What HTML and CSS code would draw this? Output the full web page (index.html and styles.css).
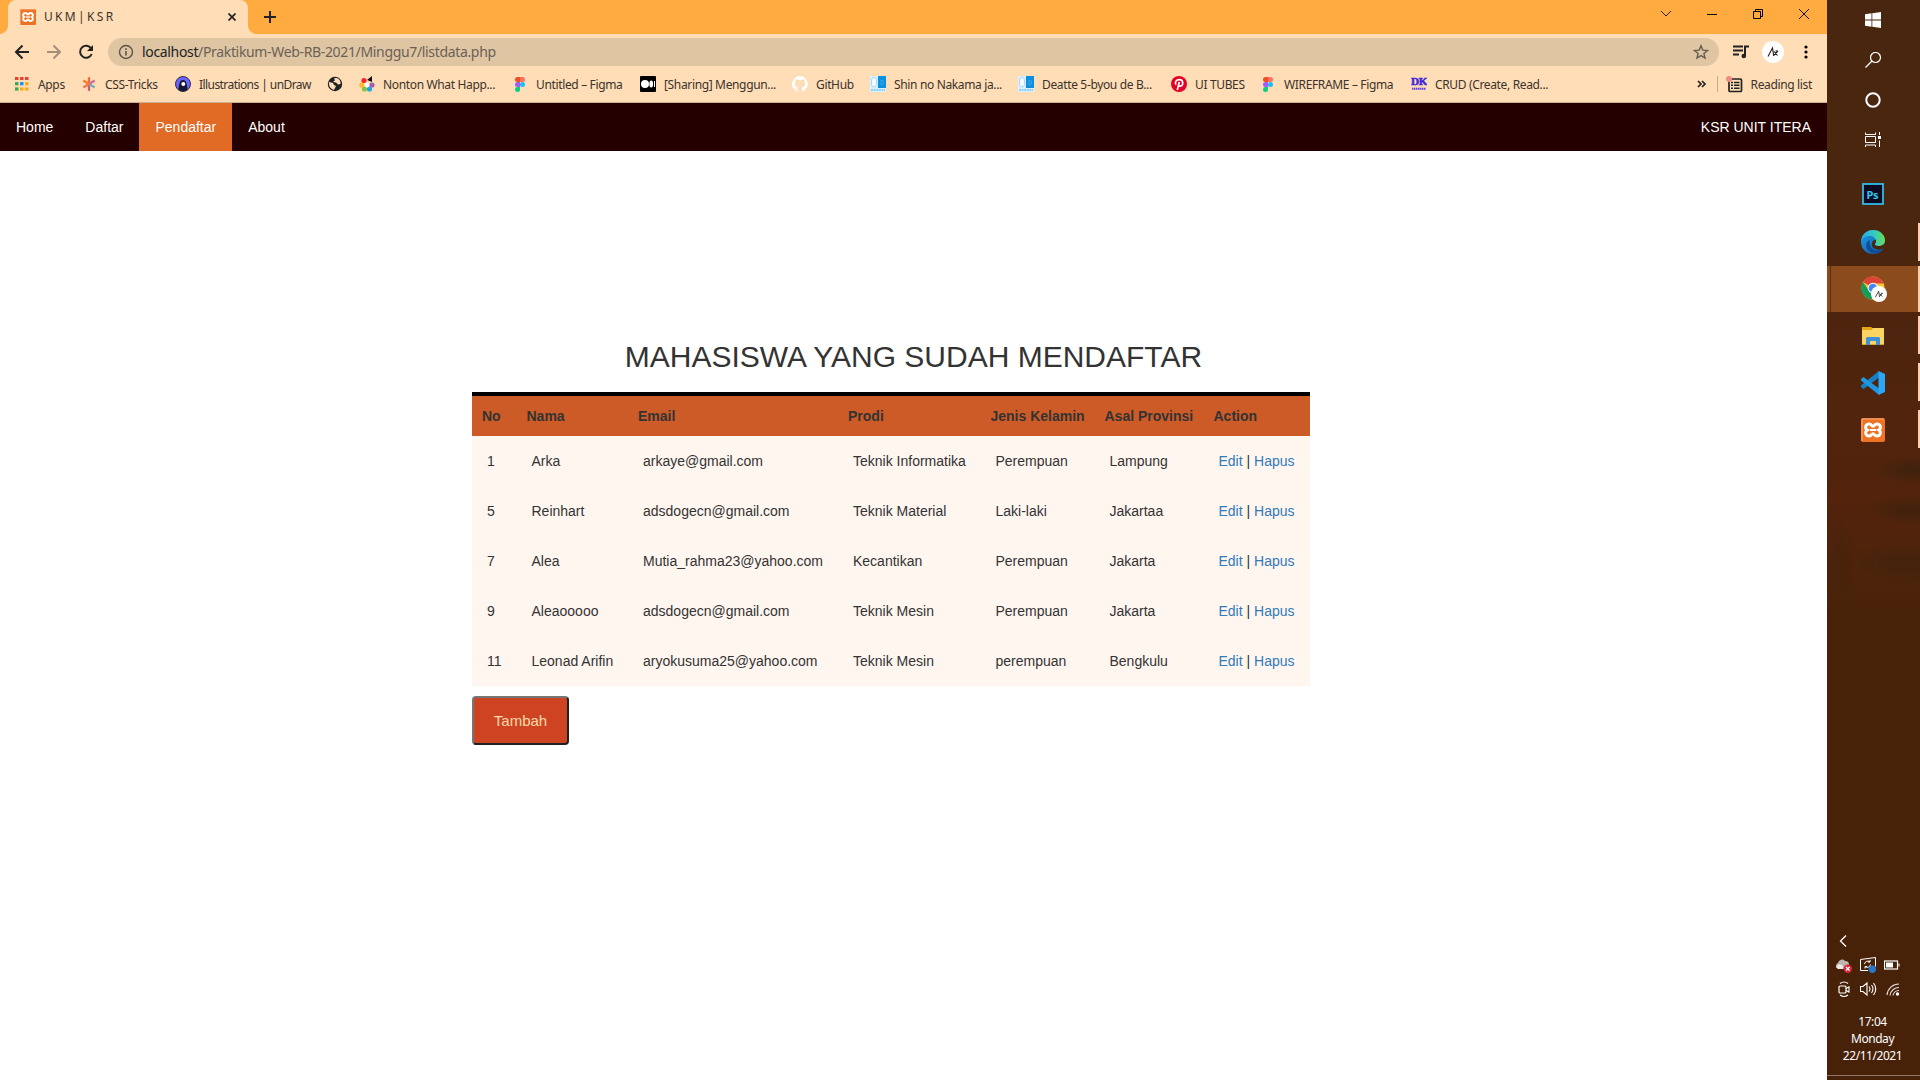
FILE: index.html
```html
<!DOCTYPE html>
<html lang="id">
<head>
<meta charset="utf-8">
<title>U K M | K S R</title>
<link rel="stylesheet" href="styles.css">
</head>
<body>
<svg class="defs" width="0" height="0">
  <symbol id="xampp" viewBox="0 0 24 24"><rect width="24" height="24" rx="2" fill="#ed7324"/><path d="M1 1h22M1 1v22" stroke="#f5a46e" stroke-width="1.2"/><path d="M8.200 6C4 6 3.800 10.500 6.300 12 3.800 13.500 4 18 8.200 18 10.700 18 10.500 15.700 12 15.700s1.300 2.300 3.800 2.300c4.200 0 4.400-4.500 1.900-6 2.500-1.500 2.300-6-1.900-6-2.500 0-2.300 2.300-3.800 2.300S10.700 6 8.200 6z" fill="none" stroke="#fff" stroke-width="3"/><path d="M9 12h6" stroke="#fff" stroke-width="2"/></symbol>
  <symbol id="figma" viewBox="0 0 16 16"><path d="M5.500 1H8v5H5.500a2.500 2.500 0 010-5z" fill="#f24e1e"/><path d="M8 1h2.500a2.500 2.500 0 010 5H8z" fill="#ff7262"/><path d="M5.500 6H8v5H5.500a2.500 2.500 0 010-5z" fill="#a259ff"/><circle cx="10.500" cy="8.500" r="2.500" fill="#1abcfe"/><path d="M5.500 11H8v2.500A2.500 2.500 0 115.500 11z" fill="#0acf83"/></symbol>
  <symbol id="anime" viewBox="0 0 16 16"><rect width="16" height="16" fill="#d8f0ff"/><rect x="8" width="8" height="12" fill="#0c8fdc"/><rect x="1.500" y="1.500" width="5" height="9.500" rx="2.500" fill="#f4fbff" stroke="#a5daf8"/><path d="M11 4.500c2-.5 3 .5 2.500 2.500S12 9.500 11 9z" fill="none" stroke="#3aa8e8"/><path d="M1 14h14" stroke="#8fd2f7" stroke-width="2" stroke-dasharray="2 .6"/></symbol>
  <symbol id="avatar" viewBox="0 0 22 22"><circle cx="11" cy="11" r="11" fill="#fff"/><path d="M6 15.500l4.500-8.500 1.200 8M12 10.500l3.500 4M16 10l-4.500 4.500M13.500 10h2.500" fill="none" stroke="#222" stroke-width="1.100"/></symbol>
</svg>

<div class="desktop">
  <div class="browser">
    <div class="tabstrip">
      <div class="tab">
        <svg width="16" height="16"><use href="#xampp"/></svg>
        <span class="tab-title">U K M | K S R</span>
        <svg class="tab-close" width="8" height="8" viewBox="0 0 8 8"><path d="M.5.5l7 7M7.500.500l-7 7" stroke="#222" stroke-width="1.700"/></svg>
      </div>
      <svg class="new-tab" width="12" height="12" viewBox="0 0 12 12"><path d="M6 0v12M0 6h12" stroke="#222" stroke-width="2"/></svg>
      <div class="window-controls">
        <svg width="12" height="12" viewBox="0 0 12 12"><path d="M1 3l5 5 5-5" fill="none" stroke="#222"/></svg>
        <svg width="12" height="12" viewBox="0 0 12 12"><path d="M1 6.500h10" stroke="#000"/></svg>
        <svg width="12" height="12" viewBox="0 0 12 12"><path d="M1.500 3.500h7v7h-7zM3.500 3.500v-2h7v7h-2" fill="none" stroke="#000"/></svg>
        <svg width="12" height="12" viewBox="0 0 12 12"><path d="M1 1l10 10M11 1L1 11" stroke="#111"/></svg>
      </div>
    </div>

    <div class="toolbar">
      <svg width="16" height="16" viewBox="0 0 16 16"><path d="M15 8H2M8.500 1.500L2 8l6.500 6.500" fill="none" stroke="#222" stroke-width="2"/></svg>
      <svg width="16" height="16" viewBox="0 0 16 16"><path d="M1 8h13M7.500 1.500L14 8l-6.500 6.500" fill="none" stroke="#a38f79" stroke-width="2"/></svg>
      <svg width="16" height="16" viewBox="0 0 16 16"><path d="M13.200 4.600A6 6 0 1013.700 10" fill="none" stroke="#222" stroke-width="2"/><path d="M15 1v6H9z" fill="#222"/></svg>
      <div class="address">
        <svg width="16" height="16" viewBox="0 0 16 16"><circle cx="8" cy="8" r="6.500" fill="none" stroke="#5b544d" stroke-width="1.400"/><path d="M8 7v4.500M8 4.300V6" stroke="#5b544d" stroke-width="1.600"/></svg>
        <span class="url"><b>localhost</b>/Praktikum-Web-RB-2021/Minggu7/listdata.php</span>
        <svg width="16" height="16" viewBox="0 0 16 16"><path d="M8 1.800l1.800 4.300 4.700.400-3.600 3 1.100 4.500L8 11.600 4 14l1.100-4.500-3.600-3 4.700-.400z" fill="none" stroke="#655d55" stroke-width="1.400"/></svg>
      </div>
      <svg width="16" height="16" viewBox="0 0 16 16"><path d="M0 2.500h10M0 6.500h10M0 10.500h6" stroke="#222" stroke-width="2"/><path d="M12 12V2.500h4" fill="none" stroke="#222" stroke-width="2"/><circle cx="10.800" cy="12" r="2.300" fill="#222"/></svg>
      <svg width="22" height="22"><use href="#avatar"/></svg>
      <svg width="4" height="14" viewBox="0 0 4 14"><circle cx="2" cy="2" r="1.600"/><circle cx="2" cy="7" r="1.600"/><circle cx="2" cy="12" r="1.600"/></svg>
    </div>

    <div class="bookmarks">
      <div class="bookmark"><svg width="16" height="16" viewBox="0 0 16 16"><path d="M1 2.500h3.500M6 2.500h3.500M11 2.500h3.500" stroke="#ea4335" stroke-width="3.200"/><path d="M1 7.700h3.500" stroke="#34a853" stroke-width="3.200"/><path d="M6 7.700h3.500" stroke="#1a8cff" stroke-width="3.200"/><path d="M11 7.700h3.500" stroke="#fbab05" stroke-width="3.200"/><path d="M1 13h3.500" stroke="#34a853" stroke-width="3.200"/><path d="M6 13h3.500M11 13h3.500" stroke="#fbab05" stroke-width="3.200"/></svg><span>Apps</span></div>
      <div class="bookmark"><svg width="16" height="16" viewBox="0 0 16 16"><g stroke-width="2.300"><path d="M8 8V1.200" stroke="#f56b35"/><path d="M8 8v6.800" stroke="#d4566a"/><path d="M8 8L2.300 4.500" stroke="#ff7a22"/><path d="M8 8l5.700 3.500" stroke="#6fb0b8"/><path d="M8 8l5.700-3.500" stroke="#d66a9a"/><path d="M8 8l-5.700 3.500" stroke="#ee7650"/></g></svg><span>CSS-Tricks</span></div>
      <div class="bookmark tight"><svg width="16" height="16" viewBox="0 0 16 16"><circle cx="8" cy="8" r="7.500" fill="#6c63ff" stroke="#2f2e41"/><path d="M3.500 13.500C4 10 4 4 8 4s4 6 4.500 9.500A7 7 0 013.500 13.500z" fill="#17172d"/><circle cx="8.300" cy="8" r="2" fill="#fff"/></svg><span>Illustrations | unDraw</span></div>
      <div class="bookmark"><svg width="16" height="16" viewBox="0 0 16 16"><circle cx="8" cy="8" r="7.200" fill="#202124"/><path d="M2 6l4 1 1 2 2 1-2 4C4 13 2 11 2 8zM7 2.300l1 2L6 6l3 .500 2 2 2.500-.500C14 4 11 2 9 2z" fill="#ffddb8"/></svg></div>
      <div class="bookmark"><svg width="16" height="16" viewBox="0 0 16 16"><circle cx="5" cy="4.500" r="2.600" fill="#f3262e"/><circle cx="2.800" cy="9" r="2.600" fill="#fcb72b"/><circle cx="5.500" cy="13" r="2.600" fill="#8ac43f"/><circle cx="10.500" cy="13" r="2.600" fill="#22a7e0"/><circle cx="13" cy="9" r="2.600" fill="#a35bb4"/><circle cx="8" cy="9" r="2.400" fill="#fff"/><path d="M8 4l5-4v6z" fill="#111"/></svg><span>Nonton What Happ...</span></div>
      <div class="bookmark"><svg width="16" height="16"><use href="#figma"/></svg><span>Untitled – Figma</span></div>
      <div class="bookmark"><svg width="16" height="16" viewBox="0 0 16 16"><rect width="16" height="16" rx="1"/><circle cx="5" cy="8" r="4" fill="#fff"/><ellipse cx="11.200" cy="8" rx="1.900" ry="3.600" fill="#fff"/><path d="M14.500 5v6" stroke="#fff"/></svg><span>[Sharing] Menggun...</span></div>
      <div class="bookmark"><svg width="16" height="16" viewBox="0 0 16 16"><path fill="#fff" d="M8 0a8 8 0 00-2.500 15.600c.4.100.5-.2.500-.4v-1.500c-2.200.5-2.700-.9-2.700-.9-.4-.9-.9-1.200-.9-1.200-.7-.5.100-.5.100-.5.800.1 1.200.8 1.200.8.700 1.200 1.900.9 2.300.7.100-.5.300-.9.500-1.100-1.800-.2-3.600-.9-3.600-4 0-.9.300-1.600.8-2.100-.1-.2-.4-1 .1-2.100 0 0 .7-.2 2.200.8a7.500 7.500 0 014 0c1.500-1 2.200-.8 2.200-.8.400 1.100.2 1.900.1 2.100.5.600.8 1.300.8 2.100 0 3.100-1.900 3.700-3.700 3.900.3.300.6.800.6 1.500v2.200c0 .2.100.5.500.4A8 8 0 008 0z"/></svg><span>GitHub</span></div>
      <div class="bookmark"><svg width="16" height="16"><use href="#anime"/></svg><span>Shin no Nakama ja...</span></div>
      <div class="bookmark"><svg width="16" height="16"><use href="#anime"/></svg><span>Deatte 5-byou de B...</span></div>
      <div class="bookmark"><svg width="16" height="16" viewBox="0 0 16 16"><circle cx="8" cy="8" r="8" fill="#e60023"/><path d="M5 8.800C3.500 6.500 5 3.600 8.300 3.600c4.700 0 4.200 6.600.8 6.600-1.100 0-1.500-.8-1.500-.8M8.300 6L6.300 14" fill="none" stroke="#fff" stroke-width="1.700"/></svg><span>UI TUBES</span></div>
      <div class="bookmark"><svg width="16" height="16"><use href="#figma"/></svg><span>WIREFRAME – Figma</span></div>
      <div class="bookmark"><svg width="16" height="16" viewBox="0 0 16 16"><text class="dk" x="0" y="9" textLength="16" lengthAdjust="spacingAndGlyphs">DK</text><path d="M1 12.800h14" stroke="#5a3fea" stroke-width="2" stroke-dasharray="1.500 .5"/></svg><span>CRUD (Create, Read...</span></div>
      <div class="bookmark-tail">
        <svg class="more" width="10" height="8" viewBox="0 0 10 8"><path d="M1 1l3 3-3 3M5 1l3 3-3 3" fill="none" stroke="#222" stroke-width="1.700"/></svg>
        <i class="divider"></i>
        <svg width="17" height="17" viewBox="0 0 17 17"><rect x="3" y="3" width="12.500" height="12.500" rx="1" fill="none" stroke="#222" stroke-width="1.700"/><path d="M5 6.500h2M8 6.500h5.500M5 9.300h2M8 9.300h5.500M5 12.200h2M8 12.200h5.500" stroke="#222" stroke-width="1.500"/><circle cx="3" cy="3" r="3" fill="#f28b82"/></svg>
        <span>Reading list</span>
      </div>
    </div>

    <nav class="site-nav">
      <a>Home</a><a>Daftar</a><a class="active">Pendaftar</a><a>About</a><a class="brand">KSR UNIT ITERA</a>
    </nav>

    <main class="page">
      <h2>MAHASISWA YANG SUDAH MENDAFTAR</h2>
      <div class="listing">
        <table>
          <colgroup><col class="c-no"><col class="c-nama"><col class="c-email"><col class="c-prodi"><col class="c-jk"><col class="c-asal"><col class="c-action"></colgroup>
          <thead><tr><th>No</th><th>Nama</th><th>Email</th><th>Prodi</th><th>Jenis Kelamin</th><th>Asal Provinsi</th><th>Action</th></tr></thead>
          <tbody>
            <tr><td>1</td><td>Arka</td><td>arkaye@gmail.com</td><td>Teknik Informatika</td><td>Perempuan</td><td>Lampung</td><td><a>Edit</a> | <a>Hapus</a></td></tr>
            <tr><td>5</td><td>Reinhart</td><td>adsdogecn@gmail.com</td><td>Teknik Material</td><td>Laki-laki</td><td>Jakartaa</td><td><a>Edit</a> | <a>Hapus</a></td></tr>
            <tr><td>7</td><td>Alea</td><td>Mutia_rahma23@yahoo.com</td><td>Kecantikan</td><td>Perempuan</td><td>Jakarta</td><td><a>Edit</a> | <a>Hapus</a></td></tr>
            <tr><td>9</td><td>Aleaooooo</td><td>adsdogecn@gmail.com</td><td>Teknik Mesin</td><td>Perempuan</td><td>Jakarta</td><td><a>Edit</a> | <a>Hapus</a></td></tr>
            <tr><td>11</td><td>Leonad Arifin</td><td>aryokusuma25@yahoo.com</td><td>Teknik Mesin</td><td>perempuan</td><td>Bengkulu</td><td><a>Edit</a> | <a>Hapus</a></td></tr>
          </tbody>
        </table>
        <button class="add">Tambah</button>
      </div>
    </main>
  </div>

  <aside class="taskbar">
    <div class="system">
      <svg width="16" height="16" viewBox="0 0 16 16"><path fill="#fff" d="M0 2.200L6.500 1.300V7.500H0zM7.300 1.200L16 0v7.500H7.300zM0 8.400h6.500v6.300L0 13.800zM7.300 8.400H16V16l-8.700-1.200z"/></svg>
      <svg width="16" height="16" viewBox="0 0 16 16"><circle cx="10.500" cy="5.500" r="5" fill="none" stroke="#fff" stroke-width="1.200"/><path d="M7 9L.5 15.500" stroke="#fff" stroke-width="1.300"/></svg>
      <svg width="16" height="16" viewBox="0 0 16 16"><circle cx="8" cy="8" r="6.700" fill="none" stroke="#fff" stroke-width="2"/></svg>
      <svg width="16" height="16" viewBox="0 0 16 16"><path d="M.5.500v2h10v-2M.5 15v-2h10v2M.5 4.500h10v6H.5zM14.500 0v3M14.500 8.500V15" fill="none" stroke="#fff"/><path d="M13 4h3v3h-3z" fill="#fff"/></svg>
    </div>
    <div class="apps">
      <div class="app app-ps"><svg width="22" height="22" viewBox="0 0 22 22"><rect x="1" y="1" width="20" height="20" fill="#0c0920" stroke="#2fbbe8" stroke-width="1.800"/><text class="ps" x="4.500" y="15.500">Ps</text></svg></div>
      <div class="app open"><svg width="24" height="24" viewBox="0 0 24 24"><defs><linearGradient id="eg" x1="0" x2="1"><stop offset="0" stop-color="#29a8e2"/><stop offset=".55" stop-color="#34c9c4"/><stop offset="1" stop-color="#6ae04f"/></linearGradient><linearGradient id="eb" x1="0" x2="1" y2="1"><stop offset="0" stop-color="#1b9de2"/><stop offset="1" stop-color="#1257a5"/></linearGradient></defs><circle cx="12" cy="12" r="12" fill="url(#eb)"/><path d="M0 12C.5 4 6 0 12 0c7 0 12 5 12 10 0 4-3 6-6 6-2.500 0-4-.8-4-1.500s1-1 1-3C15 8 12 6 9 6 4 6 1 8.500 0 12z" fill="url(#eg)"/><path d="M9 10c-2 6 3 11 8 10.500 3 0 4.500-1.500 5.800-2C20 24 10 26 6 19 4 15 6 11 9 10z" fill="#134c96"/><path d="M14.500 9.500C16 12 13.500 13 13.800 14.500 14.500 16.500 20 17 24 13.500c.8 2-.2 3.500-1.200 4.500-4 3.200-12 1.500-12-3.500 0-2.500 1.500-4.500 3.700-5z" fill="#4b260e"/></svg></div>
      <div class="app open current"><svg width="26" height="26" viewBox="0 0 26 26"><circle cx="12" cy="12" r="11.500" fill="#fbc52d"/><path d="M12 12L2 6A11.500 11.500 0 0122.500 7.500H12z" fill="#dc4437"/><path d="M2 6a11.500 11.500 0 008.500 17.500L15 15l-6 1z" fill="#159b5a"/><circle cx="12" cy="12" r="5.300" fill="#fff"/><circle cx="12" cy="12" r="4.300" fill="#4285f4"/><svg x="10" y="10" width="16" height="16"><use href="#avatar"/></svg></svg></div>
      <div class="app open"><svg width="22" height="18" viewBox="0 0 22 18"><path d="M0 0h9l1.500 1H22v17H0z" fill="#e6a614"/><path d="M0 3h9.500L11 1h11v16H0z" fill="#fcd462"/><path d="M4 18v-6.500Q4 10 5.500 10h11q1.500 0 1.500 1.500V18h-4v-4H8v4z" fill="#3c91d9"/></svg></div>
      <div class="app open"><svg width="24" height="24" viewBox="0 0 24 24"><path d="M18 0v6.500L2.500 18 0 16v-1.500z" fill="#1480c8"/><path d="M18 24v-6.500L2.500 6 0 8v1.500z" fill="#2196e0"/><path d="M17.500 0L24 3v18l-6.500 3z" fill="#2aa8f5"/></svg></div>
      <div class="app open"><svg width="24" height="24"><use href="#xampp"/></svg></div>
    </div>
    <div class="tray">
      <svg class="chevron" width="8" height="12" viewBox="0 0 8 12"><path d="M7 .5L1.500 6 7 11.500" fill="none" stroke="#fff" stroke-width="1.300"/></svg>
      <div class="tray-row">
        <svg width="16" height="16" viewBox="0 0 16 16"><path d="M1 11a3 3 0 011-5 4 4 0 017-2 3.500 3.500 0 014 4l-3 4H3z" fill="#bcb5b0"/><path d="M0 10q3-5 7-1v3H2z" fill="#efeae6"/><circle cx="11.800" cy="11.800" r="4.200" fill="#dd2437"/><path d="M10 10l3.600 3.600M13.600 10L10 13.600" stroke="#fff" stroke-width="1.300"/></svg>
        <svg width="16" height="16" viewBox="0 0 16 16"><path d="M.5 2.500L15.500.500v9M8 13.500H.5v-11" fill="none" stroke="#fff"/><path d="M4.500 7A3.300 3.300 0 0110 5V3M10.500 7.500a3.300 3.300 0 01-5.500 2v2M10 5H8M5 9.500h2" fill="none" stroke="#fff"/><circle cx="12.300" cy="12.300" r="3.700" fill="#2877c6"/></svg>
        <svg width="16" height="16" viewBox="0 0 16 16"><rect x=".5" y="4" width="13" height="8" fill="none" stroke="#fff" stroke-width="1.200"/><path d="M2 5.500h7v5H2zM14.500 6.500h1v3h-1z" fill="#fff"/></svg>
      </div>
      <div class="tray-row">
        <svg width="16" height="16" viewBox="0 0 16 16"><rect x="3" y="5" width="7" height="7" rx="1" fill="none" stroke="#fff" stroke-width="1.200"/><path d="M10 7.500l3-1.500v5l-3-1.500M4 2.500q4-3 8 0M4 14q4 3 8 0" fill="none" stroke="#fff" stroke-width="1.100"/></svg>
        <svg width="17" height="16" viewBox="0 0 17 16"><path d="M.5 5.500H3l4-3.500v12l-4-3.500H.5zM9 5.500q2 2.500 0 5M11.500 4q3 4 0 8M13.500 2q4.500 6 0 12" fill="none" stroke="#fff" stroke-width="1.100"/></svg>
        <svg width="16" height="16" viewBox="0 0 16 16"><path d="M2 14A12 12 0 0114 3M5 14.500A9 9 0 0114 6.500M8 14.500a6 6 0 016-5" fill="none" stroke="#e4dcd7" stroke-width="1.100"/><circle cx="12.500" cy="13" r="1.700" fill="#fff"/></svg>
      </div>
      <div class="clock"><span>17:04</span><span>Monday</span><span>22/11/2021</span></div>
    </div>
  </aside>
</div>
</body>
</html>
```
FILE: styles.css
```css
* { box-sizing: border-box; }
body { margin: 0; overflow: hidden; font-family: "Liberation Sans", Arial, sans-serif; }
svg { display: block; flex: none; }
.defs { position: absolute; }
.desktop { display: flex; width: 1920px; height: 1080px; }
.browser { width: 1827px; display: flex; flex-direction: column; background: #fff; }

.tabstrip, .toolbar, .bookmarks, .clock { font-family: "Noto Sans", "Open Sans", sans-serif; color: #3b332c; white-space: nowrap; }
.tabstrip { height: 34px; display: flex; align-items: center; background: #ffab40; padding-left: 8px; }
.tab { position: relative; width: 240px; height: 34px; display: flex; align-items: center; gap: 8px; padding: 0 12px; background: #ffddb6; border-radius: 8px 8px 0 0; }
.tab::before, .tab::after { content: ""; position: absolute; bottom: 0; width: 8px; height: 8px; }
.tab::before { left: -8px; background: radial-gradient(circle at 0 0, transparent 7.500px, #ffddb6 8px); }
.tab::after { right: -8px; background: radial-gradient(circle at 100% 0, transparent 7.500px, #ffddb6 8px); }
.tab-title { font-size: 12px; letter-spacing: -.4px; padding-bottom: 1px; }
.tab-close { margin-left: auto; }
.new-tab { margin-left: 16px; }
.window-controls { margin: 0 17px 6px auto; display: flex; gap: 34px; }

.toolbar { height: 34px; display: flex; align-items: flex-start; padding: 4px 19px 0 14px; background: #ffddb6; }
.toolbar > svg { margin-top: 6px; }
.toolbar > svg:nth-child(2), .toolbar > svg:nth-child(3) { margin-left: 16px; }
.toolbar > svg:nth-child(6) { margin: 3px 20px 0 13px; }
.toolbar > svg:nth-child(7) { margin-top: 7px; }
.address { flex: 1; height: 28px; display: flex; align-items: center; gap: 8px; margin: 0 14px 0 14px; padding: 0 10px; border-radius: 14px; background: #dfc5a2; }
.url { flex: 1; padding-bottom: 1px; font-size: 14px; letter-spacing: -.34px; color: #6b6157; }
.url b { font-weight: 400; color: #222; }

.bookmarks { height: 35px; display: grid; grid-template-columns: 67px 94px 152px 32px 153px 128px 152px 78px 148px 153px 89px 151px 160px 1fr; align-items: center; padding: 0 15px 2px 14px; border-bottom: 1px solid #c9ae8f; background: #ffddb6; font-size: 12px; letter-spacing: -.35px; }
.bookmark, .bookmark-tail { display: flex; align-items: center; gap: 8px; }
.bookmark.tight { letter-spacing: -.57px; }
.bookmark-tail { justify-content: flex-end; }
.more { margin-right: 2px; }
.divider { width: 1px; height: 16px; background: #c6a98a; }
.dk { font: bold 10px "Liberation Serif", serif; fill: #3f28dc; stroke: #3f28dc; stroke-width: .5px; }

.site-nav { display: flex; height: 48px; background: #240000; }
.site-nav a { padding: 14px 16px; font-size: 14px; line-height: 20px; color: #fff; }
.site-nav .active { background: #e16a24; }
.site-nav .brand { margin-left: auto; }

.page { color: #333; font-size: 14px; line-height: 20px; }
.page h2 { margin: 189px 0 19px; text-align: center; font-size: 30px; line-height: 33px; font-weight: 400; }
.listing { width: 838px; margin-left: 472px; }
table { width: 838px; table-layout: fixed; border-collapse: separate; border-spacing: 0; border-top: 4px solid #000; background: #fff6f0; }
th, td { text-align: left; white-space: nowrap; }
th { padding: 10px; background: #cd5b27; }
td { padding: 15px; }
td a { color: #337ab7; }
.c-no { width: 44.500px; }
.c-nama { width: 111.500px; }
.c-email { width: 210px; }
.c-prodi { width: 142.500px; }
.c-jk { width: 114px; }
.c-asal { width: 109px; }
.c-action { width: 106.500px; }
.add { display: block; width: 97px; height: 49px; margin-top: 10px; padding: 0; border: 2px solid; border-color: #767676 #212121 #212121 #767676; border-radius: 4px; background: #ce4422; color: #ffd9a8; font: 15px "Liberation Sans", Arial, sans-serif; }

.taskbar { width: 93px; display: flex; flex-direction: column; background: radial-gradient(ellipse 45px 14px at 88px 470px, #41220c 20%, transparent), radial-gradient(ellipse 48px 15px at 85px 510px, #42220c 20%, transparent), radial-gradient(ellipse 60px 20px at 80px 563px, #44220b 20%, transparent), radial-gradient(ellipse 16px 50px at 14px 565px, #48220b 20%, transparent), linear-gradient(#49260f 0, #4a260e 230px, #50240d 400px, #53230c 500px, #4e230b 570px, #472209 620px, #472209); }
.system { display: flex; flex-direction: column; gap: 24px; align-items: center; padding: 12px 1px 0 0; height: 169px; }
.apps { display: flex; flex-direction: column; }
.app { height: 47px; display: flex; align-items: center; justify-content: center; }
.app svg { margin-right: 1px; }
.app-ps { height: 50px; }
.app-ps svg { margin-bottom: 1px; }
.app.open { background: linear-gradient(#ffcfad, #ffcfad) right 4px / 2px 38px no-repeat; }
.app.open:nth-child(2) svg { margin-bottom: 1px; }
.app.current { margin-left: 4px; box-shadow: -1px 0 #5a3013, -4px 0 #8b4b1c; background: linear-gradient(#ffcfad, #ffcfad) right 0 / 2px 46px no-repeat, #8b4b1c; height: 46px; }
.app.current svg { margin-right: 4px; }
.ps { font: bold 11px "Noto Sans", sans-serif; letter-spacing: -.3px; fill: #31c5f0; }
.tray { margin-top: auto; height: 145px; display: flex; flex-direction: column; }
.chevron { margin: 0 0 10px 12px; }
.tray-row { display: flex; gap: 8px; padding-left: 9px; margin-bottom: 8px; }
.clock { flex: 1; display: flex; flex-direction: column; align-items: center; color: #fff; font-size: 12px; line-height: 17px; letter-spacing: -.45px; padding: 8px 2px 0 0; margin-bottom: 4px; border-bottom: 1px solid #8e7969; }
```
